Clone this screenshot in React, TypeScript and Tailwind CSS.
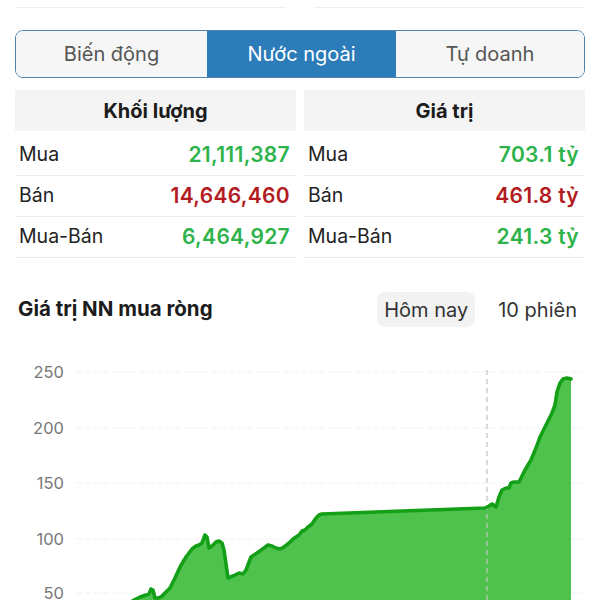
import React from "react";

const pts: [number, number][] = [
  [128, 604], [134, 600], [140, 597], [146, 595], [149, 594], [151, 589], [153, 590], [155, 598], [158, 598],
  [161, 597], [166, 592], [170, 588], [175, 578], [180, 567], [186, 557], [192, 549], [196, 546],
  [199, 545], [202, 543], [205, 535], [207, 537], [209, 548], [212, 546], [216, 542], [219, 541],
  [222, 543], [224, 550], [228, 578], [233, 576], [239, 573], [243, 574], [246, 570], [251, 557],
  [257, 553], [264, 548], [268, 545], [272, 546], [276, 548], [280, 549], [284, 547], [289, 543],
  [293, 539], [299, 535], [302, 531], [305, 530], [308, 527], [312, 524], [316, 518], [319, 515],
  [322, 514], [485, 508], [489, 506], [492, 504], [496, 507], [499, 497], [502, 490], [506, 488],
  [509, 488], [511, 483], [514, 482], [519, 482], [525, 470], [531, 460], [536, 448], [540, 437],
  [546, 425], [552, 413], [555, 405], [557, 392], [560, 383], [563, 379], [567, 378], [571, 379],
];

const OY = 340;
const line = pts.map((p, i) => `${i === 0 ? "M" : "L"}${p[0]} ${p[1] - OY}`).join(" ");
const area = `${line} L571 ${620 - OY} L128 ${620 - OY} Z`;

const ticks = [
  { v: "250", y: 372 },
  { v: "200", y: 428 },
  { v: "150", y: 483 },
  { v: "100", y: 539 },
  { v: "50", y: 593 },
];

function Row({ label, value, color }: { label: string; value: string; color: string }) {
  return (
    <div className="flex h-[41px] items-center justify-between border-b border-[#ececec] pl-[4px] pr-[6px]">
      <span className="text-[19.5px] text-[#222]">{label}</span>
      <span className={`text-[21px] font-semibold tracking-[0.3px] ${color}`}>{value}</span>
    </div>
  );
}

export default function App() {
  return (
    <div
      className="w-[600px] h-[600px] overflow-hidden bg-white"
      style={{ fontFamily: "Inter, 'Noto Sans', sans-serif" }}
    >
      <div className="flex gap-[28px] px-[15px]">
        <div className="h-[8px] flex-1 border-b border-[#efefef]" />
        <div className="h-[8px] flex-1 border-b border-[#efefef]" />
      </div>

      <div className="mx-[15px] mt-[22px] flex h-[48px] overflow-hidden rounded-[8px] border-[1.5px] border-[#5283ad]">
        <div className="flex w-[191px] items-center justify-center bg-[#f6f6f6] text-[20px] text-[#555]">
          Biến động
        </div>
        <div className="flex w-[189px] items-center justify-center bg-[#2b7cb9] text-[20px] text-white">
          Nước ngoài
        </div>
        <div className="flex flex-1 items-center justify-center bg-[#f6f6f6] text-[20px] text-[#555]">
          Tự doanh
        </div>
      </div>

      <div className="mx-[15px] mt-[12px] grid grid-cols-2 gap-x-[8px]">
        <div>
          <div className="flex h-[41px] items-center justify-center bg-[#f4f4f4] text-[20px] font-bold text-[#1c1c1c]">
            Khối lượng
          </div>
          <div className="mt-[4px]">
            <Row label="Mua" value="21,111,387" color="text-[#2db34a]" />
            <Row label="Bán" value="14,646,460" color="text-[#b31b22]" />
            <Row label="Mua-Bán" value="6,464,927" color="text-[#2db34a]" />
          </div>
        </div>
        <div>
          <div className="flex h-[41px] items-center justify-center bg-[#f4f4f4] text-[20px] font-bold text-[#1c1c1c]">
            Giá trị
          </div>
          <div className="mt-[4px]">
            <Row label="Mua" value="703.1 tỷ" color="text-[#2db34a]" />
            <Row label="Bán" value="461.8 tỷ" color="text-[#b31b22]" />
            <Row label="Mua-Bán" value="241.3 tỷ" color="text-[#2db34a]" />
          </div>
        </div>
      </div>

      <div className="mt-[34px] flex h-[35px] items-center justify-between pl-[18px] pr-[17px]">
        <span className="text-[20.5px] font-bold text-[#1c1c1c]">Giá trị NN mua ròng</span>
        <div className="flex items-center gap-[17px]">
          <span className="flex h-[35px] items-center rounded-[8px] bg-[#f2f2f2] px-[7px] text-[20px] text-[#333]">
            Hôm nay
          </span>
          <span className="px-[6px] text-[20px] text-[#333]">10 phiên</span>
        </div>
      </div>

      <svg width="600" height="273" viewBox="0 0 600 273" className="mt-[13px] block">
        {ticks.map((t) => (
          <g key={t.v}>
            <line x1="76" x2="586" y1={t.y - OY} y2={t.y - OY} stroke="#f2f2f2" strokeWidth="1" strokeDasharray="6 3" />
            <text
              x="64"
              y={t.y - OY + 6}
              textAnchor="end"
              fontSize="16.5"
              fill="#777"
              fontFamily="Inter, 'Noto Sans', sans-serif"
            >
              {t.v}
            </text>
          </g>
        ))}
        <path d={area} fill="#4fc24e" />
        <line x1="487" x2="487" y1={370 - OY} y2={620 - OY} stroke="#c4c4c4" strokeWidth="1.2" strokeDasharray="5 4" />
        <path d={line} fill="none" stroke="#14a016" strokeWidth="3.6" strokeLinejoin="round" strokeLinecap="round" />
      </svg>
    </div>
  );
}
